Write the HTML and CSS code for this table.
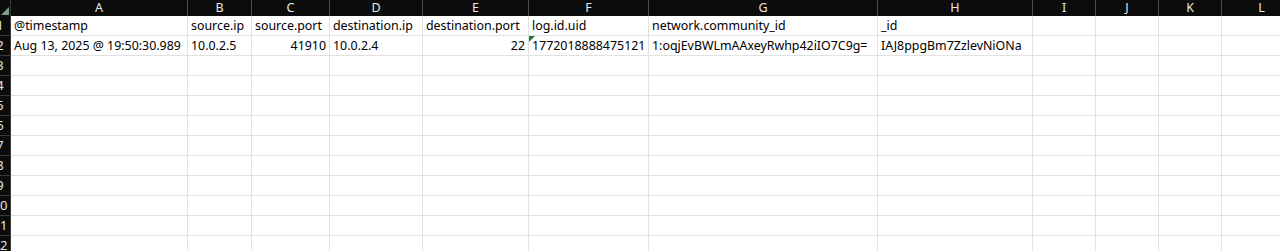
FILE: index.html
```html
<!DOCTYPE html>
<html>
<head>
<meta charset="utf-8">
<link rel="stylesheet" href="styles.css">
</head>
<body>
<div class="sheet">
  <div class="row head">
    <div class="corner"><span class="tri"></span></div>
    <div class="ch c-a">A</div><div class="ch c-b">B</div><div class="ch c-c">C</div><div class="ch c-d">D</div>
    <div class="ch c-e">E</div><div class="ch c-f">F</div><div class="ch c-g">G</div><div class="ch c-h">H</div>
    <div class="ch c-i">I</div><div class="ch c-j">J</div><div class="ch c-k">K</div><div class="ch c-l">L</div>
  </div>
  <div class="row">
    <div class="rh"><span>1</span></div>
    <div class="cell c-a">@timestamp</div><div class="cell c-b">source.ip</div><div class="cell c-c">source.port</div><div class="cell c-d">destination.ip</div>
    <div class="cell c-e">destination.port</div><div class="cell c-f">log.id.uid</div><div class="cell c-g">network.community_id</div><div class="cell c-h">_id</div>
    <div class="cell c-i"></div><div class="cell c-j"></div><div class="cell c-k"></div><div class="cell c-l"></div>
  </div>
  <div class="row">
    <div class="rh"><span>2</span></div>
    <div class="cell c-a">Aug 13, 2025 @ 19:50:30.989</div><div class="cell c-b">10.0.2.5</div><div class="cell c-c num">41910</div><div class="cell c-d">10.0.2.4</div>
    <div class="cell c-e num">22</div><div class="cell c-f flag">1772018888475121</div><div class="cell c-g">1:oqjEvBWLmAAxeyRwhp42iIO7C9g=</div><div class="cell c-h">IAJ8ppgBm7ZzlevNiONa</div>
    <div class="cell c-i"></div><div class="cell c-j"></div><div class="cell c-k"></div><div class="cell c-l"></div>
  </div>
  <div class="row"><div class="rh"><span>3</span></div><div class="cell c-a"></div><div class="cell c-b"></div><div class="cell c-c"></div><div class="cell c-d"></div><div class="cell c-e"></div><div class="cell c-f"></div><div class="cell c-g"></div><div class="cell c-h"></div><div class="cell c-i"></div><div class="cell c-j"></div><div class="cell c-k"></div><div class="cell c-l"></div></div>
  <div class="row"><div class="rh"><span>4</span></div><div class="cell c-a"></div><div class="cell c-b"></div><div class="cell c-c"></div><div class="cell c-d"></div><div class="cell c-e"></div><div class="cell c-f"></div><div class="cell c-g"></div><div class="cell c-h"></div><div class="cell c-i"></div><div class="cell c-j"></div><div class="cell c-k"></div><div class="cell c-l"></div></div>
  <div class="row"><div class="rh"><span>5</span></div><div class="cell c-a"></div><div class="cell c-b"></div><div class="cell c-c"></div><div class="cell c-d"></div><div class="cell c-e"></div><div class="cell c-f"></div><div class="cell c-g"></div><div class="cell c-h"></div><div class="cell c-i"></div><div class="cell c-j"></div><div class="cell c-k"></div><div class="cell c-l"></div></div>
  <div class="row"><div class="rh"><span>6</span></div><div class="cell c-a"></div><div class="cell c-b"></div><div class="cell c-c"></div><div class="cell c-d"></div><div class="cell c-e"></div><div class="cell c-f"></div><div class="cell c-g"></div><div class="cell c-h"></div><div class="cell c-i"></div><div class="cell c-j"></div><div class="cell c-k"></div><div class="cell c-l"></div></div>
  <div class="row"><div class="rh"><span>7</span></div><div class="cell c-a"></div><div class="cell c-b"></div><div class="cell c-c"></div><div class="cell c-d"></div><div class="cell c-e"></div><div class="cell c-f"></div><div class="cell c-g"></div><div class="cell c-h"></div><div class="cell c-i"></div><div class="cell c-j"></div><div class="cell c-k"></div><div class="cell c-l"></div></div>
  <div class="row"><div class="rh"><span>8</span></div><div class="cell c-a"></div><div class="cell c-b"></div><div class="cell c-c"></div><div class="cell c-d"></div><div class="cell c-e"></div><div class="cell c-f"></div><div class="cell c-g"></div><div class="cell c-h"></div><div class="cell c-i"></div><div class="cell c-j"></div><div class="cell c-k"></div><div class="cell c-l"></div></div>
  <div class="row"><div class="rh"><span>9</span></div><div class="cell c-a"></div><div class="cell c-b"></div><div class="cell c-c"></div><div class="cell c-d"></div><div class="cell c-e"></div><div class="cell c-f"></div><div class="cell c-g"></div><div class="cell c-h"></div><div class="cell c-i"></div><div class="cell c-j"></div><div class="cell c-k"></div><div class="cell c-l"></div></div>
  <div class="row"><div class="rh"><span>10</span></div><div class="cell c-a"></div><div class="cell c-b"></div><div class="cell c-c"></div><div class="cell c-d"></div><div class="cell c-e"></div><div class="cell c-f"></div><div class="cell c-g"></div><div class="cell c-h"></div><div class="cell c-i"></div><div class="cell c-j"></div><div class="cell c-k"></div><div class="cell c-l"></div></div>
  <div class="row"><div class="rh"><span>11</span></div><div class="cell c-a"></div><div class="cell c-b"></div><div class="cell c-c"></div><div class="cell c-d"></div><div class="cell c-e"></div><div class="cell c-f"></div><div class="cell c-g"></div><div class="cell c-h"></div><div class="cell c-i"></div><div class="cell c-j"></div><div class="cell c-k"></div><div class="cell c-l"></div></div>
  <div class="row"><div class="rh"><span>12</span></div><div class="cell c-a"></div><div class="cell c-b"></div><div class="cell c-c"></div><div class="cell c-d"></div><div class="cell c-e"></div><div class="cell c-f"></div><div class="cell c-g"></div><div class="cell c-h"></div><div class="cell c-i"></div><div class="cell c-j"></div><div class="cell c-k"></div><div class="cell c-l"></div></div>
</div>
</body>
</html>
```
FILE: styles.css
```css
html, body {
  margin: 0;
  padding: 0;
  background: #ffffff;
  overflow: hidden;
}
.sheet {
  width: 1280px;
  height: 251px;
  overflow: hidden;
  font-family: "Noto Sans", "Open Sans", sans-serif;
  font-size: 12.4px;
  color: #000;
}
.row {
  display: flex;
  height: 20px;
  white-space: nowrap;
}
.row.head {
  height: 16px;
  background: #0c0c0c;
}
.corner {
  flex: 0 0 11px;
  height: 16px;
  position: relative;
  border-right: 1px solid #3c3c3c;
  box-sizing: border-box;
}
.tri {
  position: absolute;
  right: 1px;
  bottom: 1px;
  width: 0;
  height: 0;
  border-left: 8px solid transparent;
  border-bottom: 8px solid #78a287;
}
.ch {
  box-sizing: border-box;
  border-right: 1px solid #4a4a4a;
  color: #e8e8e8;
  text-align: center;
  line-height: 16px;
  font-size: 12.5px;
  flex-shrink: 0;
}
.rh {
  flex: 0 0 11px;
  box-sizing: border-box;
  background: #0c0c0c;
  border-right: 1px solid #3a3a3a;
  border-bottom: 1px solid #3a3a3a;
  overflow: hidden;
  color: #e4e4e4;
  font-size: 13px;
  line-height: 19px;
}
.rh span {
  display: block;
  width: 30px;
  margin-left: -15px;
  text-align: center;
}
.cell {
  box-sizing: border-box;
  border-right: 1px solid #e1e1e1;
  border-bottom: 1px solid #e1e1e1;
  padding: 0 3px;
  line-height: 19px;
  overflow: visible;
  flex-shrink: 0;
  position: relative;
}
.num { text-align: right; }
.flag::before {
  content: "";
  position: absolute;
  left: 0;
  top: 0;
  width: 0;
  height: 0;
  border-top: 6px solid #1d7a3a;
  border-right: 6px solid transparent;
}
.c-a { width: 177px; }
.c-b { width: 64px; }
.c-c { width: 78px; }
.c-d { width: 93px; }
.c-e { width: 106px; }
.c-f { width: 120px; }
.c-g { width: 229px; }
.c-h { width: 155px; }
.c-i { width: 63px; }
.c-j { width: 63px; }
.c-k { width: 63px; }
.c-l { width: 80px; }
```
